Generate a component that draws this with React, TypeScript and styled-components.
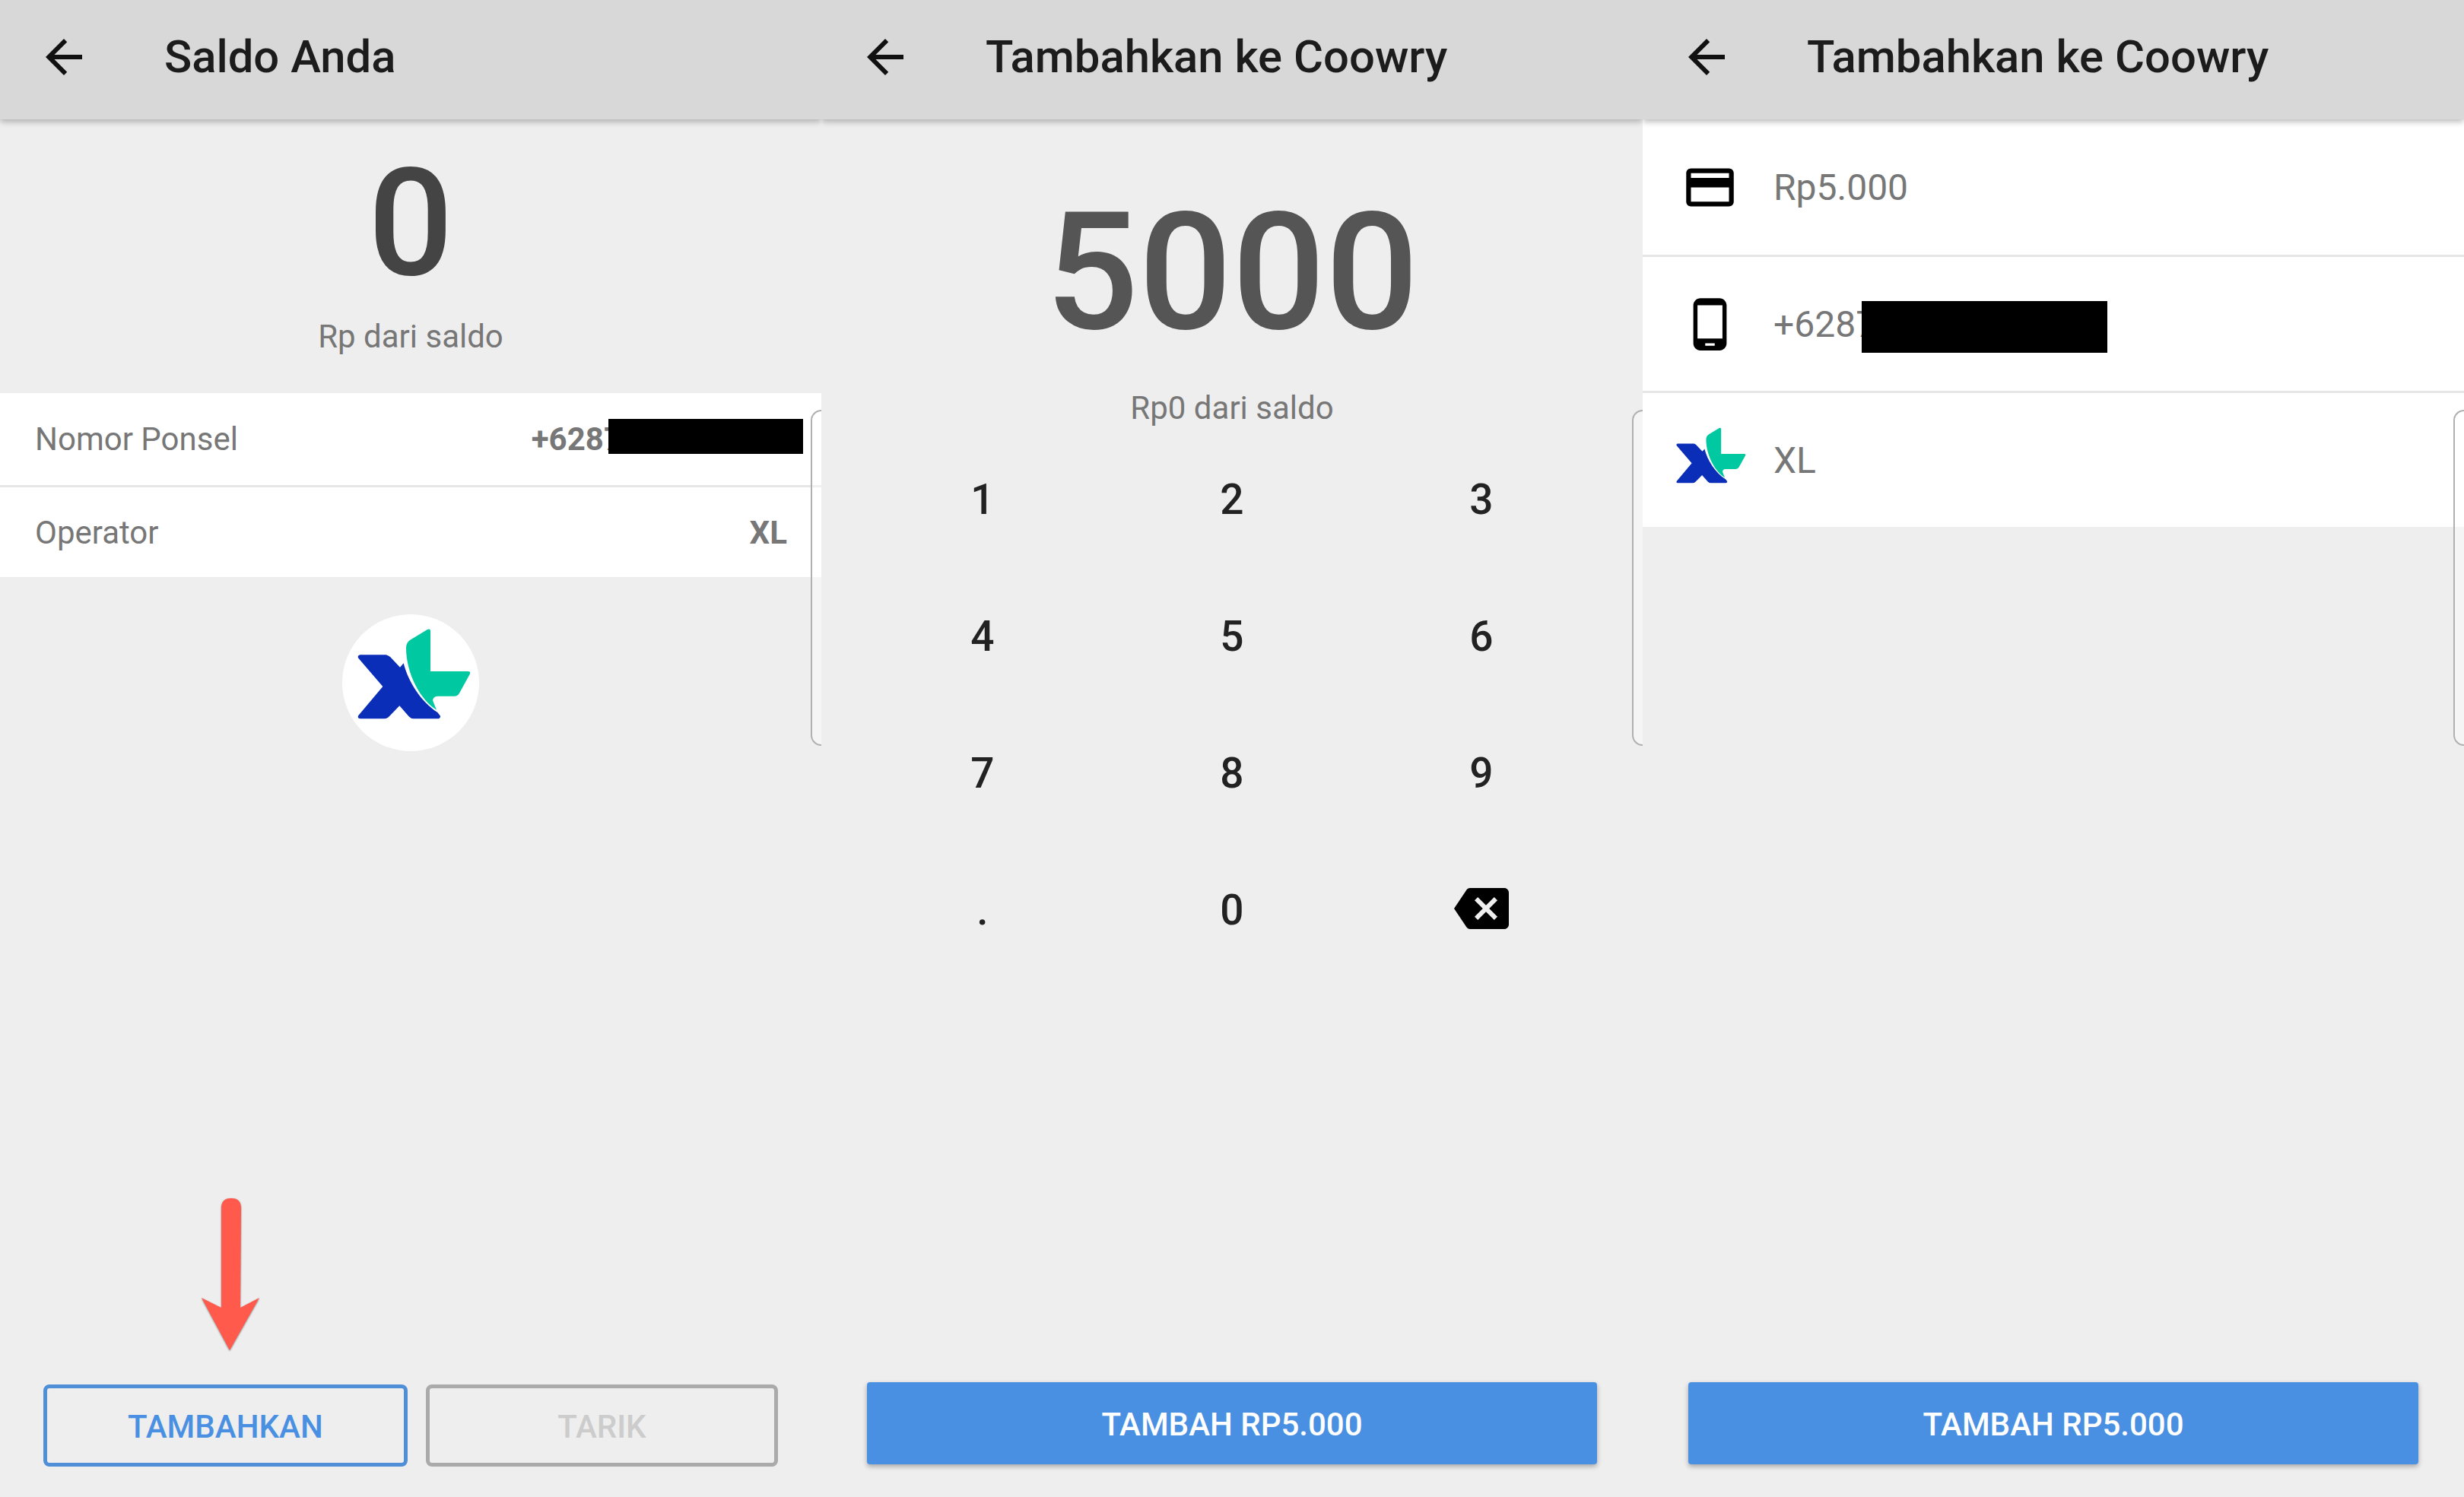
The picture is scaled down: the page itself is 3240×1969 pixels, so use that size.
import React from "react";
import styled, { createGlobalStyle } from "styled-components";

const Global = createGlobalStyle`
  html, body { margin: 0; padding: 0; background: #eeeeee; }
  body { font-family: Roboto, "Liberation Sans", sans-serif; }
  * { box-sizing: border-box; }
`;

const Screens = styled.div`
  display: grid;
  grid-template-columns: repeat(3, 1080px);
  width: 3240px;
  height: 1969px;
  overflow: hidden;
`;

const Panel = styled.section`
  position: relative;
  display: flex;
  flex-direction: column;
  height: 1969px;
  background: #eeeeee;
`;

const Header = styled.header`
  position: relative;
  z-index: 1;
  display: flex;
  align-items: center;
  flex: none;
  height: 157px;
  padding: 0 0 8px 48px;
  background: #d8d8d8;
  box-shadow: 0 3px 8px rgba(0, 0, 0, 0.28);
  clip-path: inset(0 0 -20px 0);
`;

const BackIcon = styled.svg`
  width: 72px;
  height: 72px;
  margin-right: 96px;
  fill: #111111;
`;

const Title = styled.h1`
  margin: 0;
  font-size: 59.8px;
  font-weight: 500;
  color: #1c1c1c;
  white-space: nowrap;
`;

const Hero = styled.div<{ $top: number; $bottom: number }>`
  flex: none;
  padding: ${(p) => p.$top}px 0 ${(p) => p.$bottom}px;
  text-align: center;
`;

const Amount = styled.div<{ $size: number; $color: string }>`
  font-size: ${(p) => p.$size}px;
  line-height: ${(p) => p.$size + 4}px;
  font-weight: 500;
  color: ${(p) => p.$color};
`;

const Caption = styled.div<{ $gap: number }>`
  margin-top: ${(p) => p.$gap}px;
  font-size: 42px;
  line-height: 60px;
  color: #777777;
`;

const InfoList = styled.div`
  background: #ffffff;
`;

const InfoRow = styled.div`
  display: flex;
  align-items: center;
  justify-content: space-between;
  height: 121px;
  padding: 0 45px 0 46px;
  & + & {
    border-top: 3px solid #e6e6e6;
  }
`;

const InfoLabel = styled.span`
  font-size: 42px;
  color: #777777;
`;

const InfoValue = styled.span`
  display: flex;
  align-items: center;
  font-size: 42px;
  font-weight: 700;
  color: #777777;
`;

const Redaction = styled.span<{ $w: number; $h: number; $overlap: number; $end: number; $lift: number }>`
  display: block;
  width: ${(p) => p.$w}px;
  height: ${(p) => p.$h}px;
  margin-left: -${(p) => p.$overlap}px;
  margin-right: ${(p) => p.$end}px;
  margin-bottom: ${(p) => p.$lift}px;
  background: #000000;
`;

const LogoBadge = styled.div`
  display: flex;
  align-items: center;
  justify-content: center;
  width: 180px;
  height: 180px;
  margin: 49px auto 0;
  border-radius: 50%;
  background: #ffffff;
`;

const LogoSvg = styled.svg<{ $w: number; $h: number; $lift?: number; $nudge?: number }>`
  display: block;
  flex: none;
  width: ${(p) => p.$w}px;
  height: ${(p) => p.$h}px;
  margin-bottom: ${(p) => p.$lift ?? 0}px;
  margin-left: ${(p) => p.$nudge ?? 0}px;
`;

const SideTab = styled.div`
  position: absolute;
  z-index: 2;
  top: 539px;
  right: 0;
  width: 14px;
  height: 442px;
  border: 2px solid #b0b0b0;
  border-right: none;
  border-radius: 16px 0 0 16px;
  background: rgba(255, 255, 255, 0.4);
`;

const PointerArrow = styled.svg`
  position: absolute;
  z-index: 2;
  left: 265px;
  top: 1576px;
  width: 76px;
  height: 200px;
  fill: #ff5a4c;
  filter: drop-shadow(0 1px 1px rgba(0, 0, 0, 0.45));
`;

const Footer = styled.footer<{ $bottom: number }>`
  display: flex;
  gap: 24px;
  margin-top: auto;
  padding: 0 60px ${(p) => p.$bottom}px;
`;

const OutlineButtons = styled(Footer)`
  padding-left: 57px;
  padding-right: 57px;
`;

const OutlineButton = styled.button<{ $grow: number; $tone: string; $text: string }>`
  flex: ${(p) => p.$grow} 1 0;
  height: 108px;
  padding: 3px 0 0;
  border: 5px solid ${(p) => p.$tone};
  border-radius: 8px;
  background: transparent;
  font-family: inherit;
  font-size: 42px;
  font-weight: 500;
  color: ${(p) => p.$text};
`;

const PrimaryButton = styled.button`
  width: 100%;
  height: 108px;
  padding: 2px 0 0;
  border: none;
  border-radius: 4px;
  background: #4a90e2;
  box-shadow: 0 3px 6px rgba(0, 0, 0, 0.3);
  font-family: inherit;
  font-size: 42px;
  font-weight: 500;
  color: #ffffff;
`;

const Keypad = styled.div`
  display: grid;
  grid-template-columns: repeat(3, 328px);
  grid-auto-rows: 180px;
  justify-content: center;
`;

const Key = styled.div`
  display: flex;
  align-items: center;
  justify-content: center;
  font-size: 55px;
  font-weight: 500;
  color: #222222;
`;

const BackspaceIcon = styled.svg`
  width: 72px;
  height: 72px;
  margin-bottom: 4px;
  fill: #000000;
`;

const DetailList = styled.div`
  background: #ffffff;
`;

const DetailRow = styled.div`
  display: flex;
  align-items: center;
  height: 178px;
  padding-left: 42px;
  & + & {
    border-top: 3px solid #e6e6e6;
    height: 179px;
  }
`;

const DetailIconSlot = styled.div`
  display: flex;
  align-items: center;
  justify-content: center;
  flex: none;
  width: 92px;
  height: 92px;
  margin-right: 38px;
`;

const DetailIcon = styled.svg`
  width: 75px;
  height: 75px;
  fill: #000000;
`;

const DetailText = styled.span`
  font-size: 48px;
  color: #777777;
`;

const LogoMark = () => (
  <>
    <path
      fill="#0a2eb8"
      d="M160 245 L262 245 Q272 246 280 254 L318 294 L332 278 C350 350 400 430 466 472 L477 486 Q478 497 466 497 L372 497 Q362 497 354 489 L316 446 L274 489 Q266 497 256 497 L160 497 Q148 494 154 484 L250 370 L154 258 Q148 248 160 245 Z"
    />
    <path
      fill="#00c8a0"
      d="M358 186 L426 145 Q438 140 438 152 L438 310 L586 310 Q597 310 594 320 L552 396 Q546 408 532 408 L466 408 Q448 410 447 425 L462 462 C400 425 342 320 342 218 Q342 196 358 186 Z"
    />
  </>
);

const BackArrow = () => (
  <BackIcon viewBox="0 0 24 24" aria-hidden>
    <path d="M20 11H7.83l5.59-5.59L12 4l-8 8 8 8 1.41-1.41L7.83 13H20v-2z" />
  </BackIcon>
);

const KEYS = ["1", "2", "3", "4", "5", "6", "7", "8", "9", ".", "0"];

export default function App() {
  return (
    <>
      <Global />
      <Screens>
        <Panel>
          <Header>
            <BackArrow />
            <Title>Saldo Anda</Title>
          </Header>
          <Hero $top={36} $bottom={44}>
            <Amount $size={197} $color="#444444">0</Amount>
            <Caption $gap={19}>Rp dari saldo</Caption>
          </Hero>
          <InfoList>
            <InfoRow>
              <InfoLabel>Nomor Ponsel</InfoLabel>
              <InfoValue>
                +6287
                <Redaction $w={256} $h={46} $overlap={18} $end={-21} $lift={8} />
              </InfoValue>
            </InfoRow>
            <InfoRow>
              <InfoLabel>Operator</InfoLabel>
              <InfoValue>XL</InfoValue>
            </InfoRow>
          </InfoList>
          <LogoBadge>
            <LogoSvg $w={180} $h={180} viewBox="90 85 540 540" aria-label="XL">
              <LogoMark />
            </LogoSvg>
          </LogoBadge>
          <SideTab />
          <PointerArrow viewBox="0 0 76 200" aria-hidden>
            <path d="M26 13 Q26 0 39 0 Q52 0 52 13 L51 144 L76 131 L37 200 L0 131 L26 144 Z" />
          </PointerArrow>
          <OutlineButtons $bottom={40}>
            <OutlineButton $grow={479} $tone="#4f8fd8" $text="#4a90e2">TAMBAHKAN</OutlineButton>
            <OutlineButton $grow={463} $tone="#aaaaaa" $text="#cccccc">TARIK</OutlineButton>
          </OutlineButtons>
        </Panel>

        <Panel>
          <Header>
            <BackArrow />
            <Title>Tambahkan ke Coowry</Title>
          </Header>
          <Hero $top={92} $bottom={0}>
            <Amount $size={216} $color="#555555">5000</Amount>
            <Caption $gap={38}>Rp0 dari saldo</Caption>
          </Hero>
          <Keypad>
            {KEYS.map((k) => (
              <Key key={k}>{k}</Key>
            ))}
            <Key>
              <BackspaceIcon viewBox="0 0 24 24" aria-label="Hapus">
                <path d="M22 3H7c-.69 0-1.23.35-1.59.88L0 12l5.41 8.11c.36.53.9.89 1.59.89h15c1.1 0 2-.9 2-2V5c0-1.1-.9-2-2-2zm-3 12.59L17.59 17 14 13.41 10.41 17 9 15.59 12.59 12 9 8.41 10.41 7 14 10.59 17.59 7 19 8.41 15.41 12 19 15.59z" />
              </BackspaceIcon>
            </Key>
          </Keypad>
          <SideTab />
          <Footer $bottom={43}>
            <PrimaryButton>TAMBAH RP5.000</PrimaryButton>
          </Footer>
        </Panel>

        <Panel>
          <Header>
            <BackArrow />
            <Title>Tambahkan ke Coowry</Title>
          </Header>
          <DetailList>
            <DetailRow>
              <DetailIconSlot>
                <DetailIcon viewBox="0 0 24 24" aria-hidden>
                  <path d="M20 4H4c-1.11 0-1.99.89-1.99 2L2 18c0 1.11.89 2 2 2h16c1.11 0 2-.89 2-2V6c0-1.11-.89-2-2-2zm0 14H4v-6h16v6zm0-10H4V6h16v2z" />
                </DetailIcon>
              </DetailIconSlot>
              <DetailText>Rp5.000</DetailText>
            </DetailRow>
            <DetailRow>
              <DetailIconSlot>
                <DetailIcon viewBox="0 0 24 24" aria-hidden>
                  <path d="M16 1H8C6.34 1 5 2.34 5 4v16c0 1.66 1.34 3 3 3h8c1.66 0 3-1.34 3-3V4c0-1.66-1.34-3-3-3zm-2 20h-4v-1h4v1zm3.25-3H6.75V4h10.5v14z" />
                </DetailIcon>
              </DetailIconSlot>
              <DetailText>+6287</DetailText>
              <Redaction $w={323} $h={68} $overlap={19} $end={0} $lift={-8} />
            </DetailRow>
            <DetailRow>
              <DetailIconSlot>
                <LogoSvg $w={92} $h={74} $lift={12} $nudge={4} viewBox="150 140 448 360" aria-label="XL">
                  <LogoMark />
                </LogoSvg>
              </DetailIconSlot>
              <DetailText>XL</DetailText>
            </DetailRow>
          </DetailList>
          <SideTab />
          <Footer $bottom={43}>
            <PrimaryButton>TAMBAH RP5.000</PrimaryButton>
          </Footer>
        </Panel>
      </Screens>
    </>
  );
}
